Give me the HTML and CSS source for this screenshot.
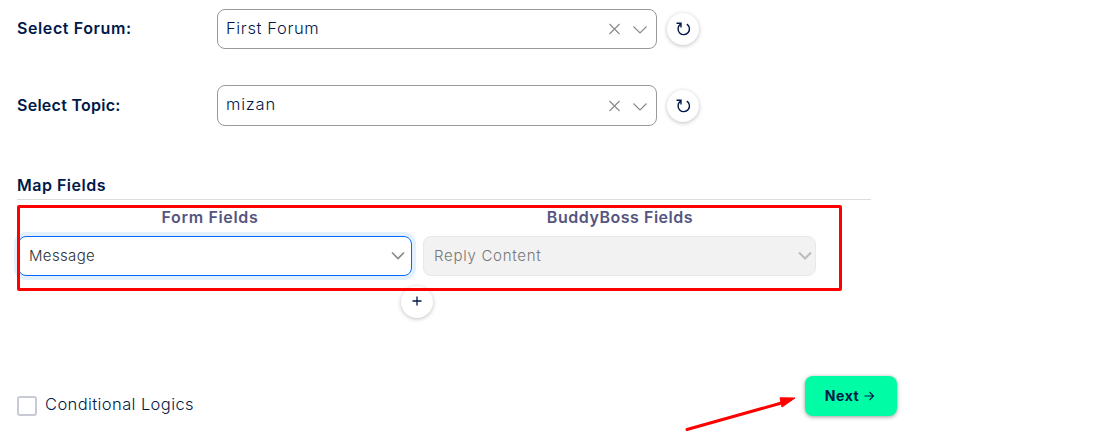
FILE: index.html
```html
<!DOCTYPE html>
<html lang="en">
<head>
<meta charset="utf-8">
<title>Action settings</title>
<link rel="stylesheet" href="styles.css">
</head>
<body>
<main class="page">
  <div class="row forum">
    <b class="label"><span class="t-forum">Select Forum:</span></b>
    <div class="select"><span class="value t-first">First Forum</span>
      <svg class="tools" width="42" height="16" viewBox="0 0 42 16"><path d="M3.5 3l10 10M13.5 3l-10 10M27.5 5.5l6.5 6.5 6.5-6.5"/></svg>
    </div>
    <button class="round" aria-label="Refresh"><svg width="16" height="16" viewBox="0 0 16 16"><path d="M11.8 3.1A5.7 5.7 0 1 1 5.3 3.4M1.5 2.2H6V6.6"/></svg></button>
  </div>
  <div class="row topic">
    <b class="label"><span class="t-topic">Select Topic:</span></b>
    <div class="select tall"><span class="value t-mizan">mizan</span>
      <svg class="tools" width="42" height="16" viewBox="0 0 42 16"><path d="M3.5 3l10 10M13.5 3l-10 10M27.5 5.5l6.5 6.5 6.5-6.5"/></svg>
    </div>
    <button class="round" aria-label="Refresh"><svg width="16" height="16" viewBox="0 0 16 16"><path d="M11.8 3.1A5.7 5.7 0 1 1 5.3 3.4M1.5 2.2H6V6.6"/></svg></button>
  </div>
  <h2 class="heading"><span class="t-map">Map Fields</span></h2>
  <section class="map">
    <div class="titles"><span><i class="t-form">Form Fields</i></span><span><i class="t-buddy">BuddyBoss Fields</i></span></div>
    <div class="fields">
      <div class="field active"><span class="t-message">Message</span><svg width="14" height="10" viewBox="0 0 14 10"><path d="M1 1.5l6 6 6-6"/></svg></div>
      <div class="field disabled"><span class="t-reply">Reply Content</span><svg width="14" height="10" viewBox="0 0 14 10"><path d="M1 1.5l6 6 6-6"/></svg></div>
    </div>
    <button class="round add" aria-label="Add field"><svg width="12" height="12" viewBox="0 0 12 12"><path d="M1.5 6h9M6 1.5v9"/></svg></button>
    <div class="highlight"></div>
  </section>
  <footer class="footer">
    <label class="check"><span class="box"></span><span class="t-cond">Conditional Logics</span></label>
    <button class="next"><span class="t-next">Next</span><svg width="10" height="10" viewBox="0 0 10 10"><path d="M.5 5h9M5.5 1l4 4-4 4"/></svg></button>
    <svg class="pointer" width="114" height="36" viewBox="0 0 114 36"><path class="shaft" d="M3 33.5L101 6"/><path class="head" d="M96 1.8L111 2 98 11z"/></svg>
  </footer>
</main>
</body>
</html>
```
FILE: styles.css
```css
* { box-sizing: border-box; }
body { margin: 0; background: #fff; color: #00194a; font: 300 16.5px/20px Inter, "Open Sans", sans-serif; }
.page { width: 1104px; height: 446px; padding: 9px 0 0 17px; overflow: hidden; }
span, i { white-space: nowrap; }
.row { display: flex; align-items: center; height: 40px; }
.topic { height: 41px; margin-top: 36px; }
.label { width: 200px; padding-bottom: 2px; font-weight: 600; font-size: 16px; }
.select { width: 440px; height: 40px; margin-right: 10px; padding: 0 8px; border: 1px solid #999; border-radius: 8px; display: flex; align-items: center; justify-content: space-between; }
.tall { height: 41px; }
.value { padding-bottom: 2px; }
.tall .value { padding-bottom: 4px; }
.tools { fill: none; stroke: #888; stroke-width: 1.1; }
button { border: 0; padding: 0; font: inherit; color: inherit; }
.round { width: 32px; height: 32px; border-radius: 50%; background: #fff; box-shadow: 0 1px 4px rgba(0,0,0,.25); display: flex; align-items: center; justify-content: center; }
.round svg { fill: none; stroke: #00194a; stroke-width: 1.4; }
.heading { width: 854px; height: 25px; margin: 49px 0 0; border-bottom: 1px solid #ddd; font-size: 16px; line-height: 20px; font-weight: 600; }
.map { position: relative; height: 120px; padding-top: 7px; }
.titles { display: grid; grid-template-columns: 386px 434px; height: 24px; color: #55557f; font-weight: 600; font-size: 16px; line-height: 20px; text-align: center; }
.titles i { font-style: normal; }
.fields { display: flex; gap: 11px; margin-top: 5px; margin-left: 1px; }
.field { width: 394px; height: 40px; padding: 0 6px 0 10px; border: 1px solid #006aff; border-radius: 8px; display: flex; align-items: center; justify-content: space-between; color: #2c3338; font-size: 15px; }
.active { box-shadow: 0 0 0 4px #e3f0fd; }
.field svg { fill: none; stroke: #888; stroke-width: 1.6; }
.disabled { width: 393px; padding: 0 3px 0 10px; border-color: #e9e9e9; background: #f2f2f2; color: #777; }
.disabled svg { stroke: #bbb; stroke-width: 2; }
.add { margin: 10px 0 0 384px; }
.add svg { margin-bottom: 2px; stroke-width: 1.3; }
.highlight { position: absolute; left: 0; top: 5px; width: 825px; height: 86px; border: 3px solid #f00; border-radius: 2px; }
.footer { position: relative; width: 880px; margin-top: 56px; display: flex; align-items: flex-start; justify-content: space-between; }
.check { display: flex; gap: 8px; padding-top: 18px; }
.box { width: 20px; height: 20px; margin-top: 2px; border: 2px solid #c8cbd6; border-radius: 3px; }
.next { width: 92px; height: 40px; border-radius: 8px; background: #00fca4; box-shadow: 0 1px 4px rgba(0,0,0,.4); display: flex; align-items: center; justify-content: center; gap: 5px; padding-right: 3px; font-size: 14px; font-weight: 700; }
.next svg { fill: none; stroke: #00194a; stroke-width: 1.1; }
.pointer { position: absolute; left: 667px; top: 20px; }
.shaft { stroke: #f00; stroke-width: 3; stroke-linecap: round; }
.head { fill: #f00; stroke: #f00; }
.t-forum { letter-spacing: .6px; }
.t-topic { letter-spacing: .27px; }
.t-first { letter-spacing: .63px; }
.t-mizan { letter-spacing: .8px; }
.t-map { letter-spacing: .5px; }
.t-form { letter-spacing: .66px; }
.t-buddy { letter-spacing: .53px; }
.t-message { letter-spacing: .35px; }
.t-reply { letter-spacing: .72px; }
.t-cond { letter-spacing: .4px; }
.t-next { letter-spacing: .6px; }
```
